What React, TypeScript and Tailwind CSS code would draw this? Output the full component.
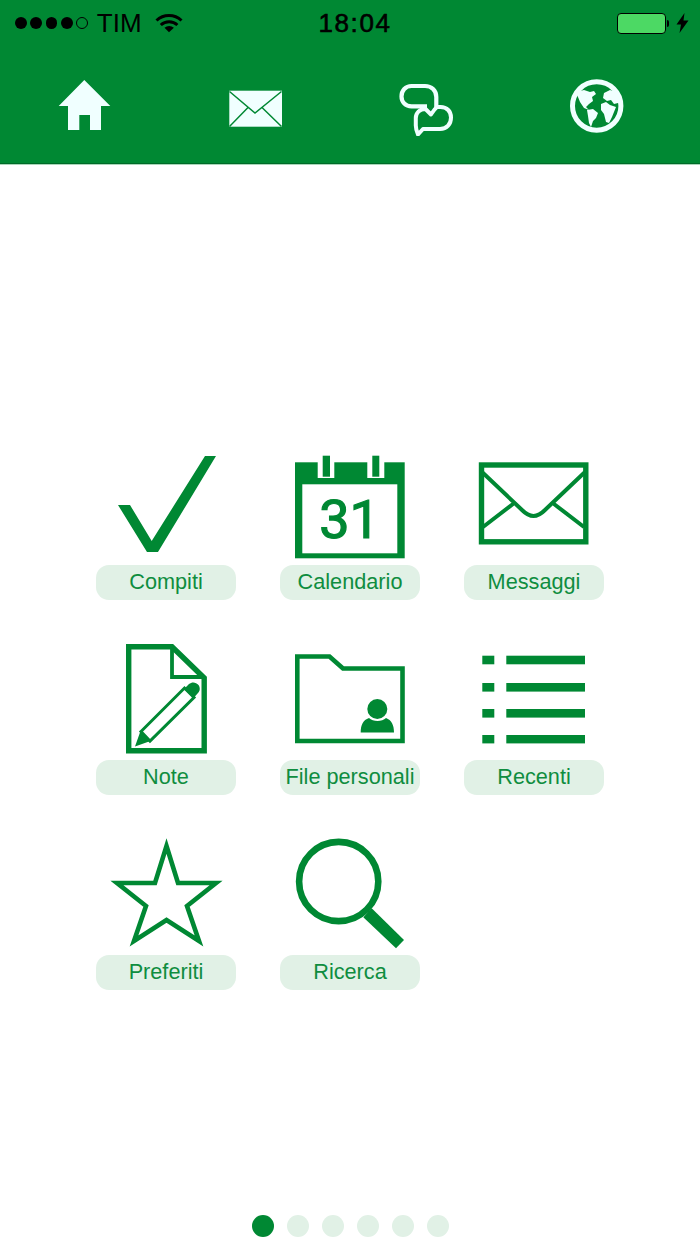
const ICE = "#f0ffff";
const GREEN = "#008833";

function Wifi() {
  return (
    <svg width="28" height="20" viewBox="156 13 28 20" className="block">
      <path d="M157.5 20.5a18 18 0 0 1 25 0" fill="none" stroke="#000" strokeWidth="3" />
      <path d="M161.8 25a12 12 0 0 1 16.6 0" fill="none" stroke="#000" strokeWidth="3" />
      <path d="M165.5 27.8a7 7 0 0 1 9.4 0L170 32.2z" fill="#000" />
    </svg>
  );
}

function StatusBar() {
  return (
    <div className="flex h-[46px] items-center pl-[15px] pr-[11px] font-['Liberation_Sans',sans-serif] text-black">
      <div className="flex flex-1 items-center">
        <div className="flex gap-[3.6px]">
          <span className="h-[11.7px] w-[11.7px] rounded-full bg-black" />
          <span className="h-[11.7px] w-[11.7px] rounded-full bg-black" />
          <span className="h-[11.7px] w-[11.7px] rounded-full bg-black" />
          <span className="h-[11.7px] w-[11.7px] rounded-full bg-black" />
          <span className="h-[11.7px] w-[11.7px] rounded-full border border-black" />
        </div>
        <span className="ml-[9px] text-[26px] leading-none">TIM</span>
        <span className="ml-[13px]">
          <Wifi />
        </span>
      </div>
      <span className="ml-[6px] text-[26px] font-medium leading-none tracking-[1.6px] [-webkit-text-stroke:0.6px_#000]">18:04</span>
      <div className="flex flex-1 items-center justify-end">
        <div className="h-[21px] w-[49px] rounded-[4px] border-[1.5px] border-black bg-[#4cd964]" />
        <div className="ml-[1px] h-[7px] w-[2.5px] rounded-r-[2px] bg-black" />
        <svg width="13" height="20" viewBox="0 0 13 20" className="ml-[7px] block">
          <path d="M8.5 0 0.5 11.5h4.5L3.5 20 12.5 7.5H7.5z" fill="#000" />
        </svg>
      </div>
    </div>
  );
}

function HomeIcon() {
  return (
    <svg width="54" height="54" viewBox="58 78 54 54" className="block">
      <path d="M84.3 80 110.3 106H101V130H90V115H79.3V130H68V106H58.7z" fill={ICE} />
    </svg>
  );
}

function MailNavIcon() {
  return (
    <svg width="54" height="54" viewBox="229 78 54 54" className="block">
      <rect x="229.3" y="90.7" width="52.7" height="36" fill={ICE} />
      <path d="M229.5 91.5 255 113 281.5 91.5M229.5 126.5 248 107.5M281.5 126.5 262 107.5" fill="none" stroke={GREEN} strokeWidth="1.5" />
    </svg>
  );
}

function ChatIcon() {
  return (
    <svg width="56" height="58" viewBox="398 78 56 58" className="block">
      <path
        d="M427 106.3H411.5C405.5 106.3 401.5 102 401.5 96.5C401.5 90.5 405.5 86 411.5 86H425C431.5 86 436.3 90.5 436.3 97V109"
        fill="none"
        stroke={ICE}
        strokeWidth="4.2"
      />
      <path
        d="M431 114.5 425.5 109C419.5 109 415.8 113 415.8 118V125.5C415.8 129 416.5 131 418 134.5L423 129H440C447 129 451 124 451 117.5C451 111.5 447 107 440.5 107H437C434.5 109 433 111.5 431 114.5Z"
        fill="none"
        stroke={ICE}
        strokeWidth="4"
        strokeLinejoin="round"
      />
    </svg>
  );
}

function GlobeIcon() {
  return (
    <svg width="56" height="56" viewBox="569 78 56 56" className="block">
      <circle cx="596.7" cy="106" r="24.2" fill={GREEN} stroke={ICE} strokeWidth="5" />
      <g fill={ICE}>
        <path d="M576 92 584 90 590 92 594 91 596 94 592 97 593 101 589 104 586 107 589 110 584 108 580 102z" />
        <path d="M587 110 593 109 598 113 596 118 593 121 591 127 589 123 588 116z" />
        <path d="M604 93 610 90 616 92 620 97 622 105 618 103 614 104 611 100 607 101 603 98z" />
        <path d="M601 104 606 102 610 105 616 107 614 112 612 117 609 123 606 122 604 114 601 110z" />
      </g>
    </svg>
  );
}

function CheckIcon() {
  return (
    <svg width="140" height="125" viewBox="96 440 140 125" className="block">
      <path d="M118 505H130L151.7 541 205 456H216L158 552H147z" fill={GREEN} />
    </svg>
  );
}

function CalendarIcon() {
  return (
    <svg width="140" height="125" viewBox="280 440 140 125" className="block">
      <rect x="295" y="462.3" width="109.7" height="96" fill={GREEN} />
      <rect x="302.3" y="484.3" width="95" height="69" fill="#fff" />
      <rect x="317.7" y="462" width="16.6" height="16" fill="#fff" />
      <rect x="367.3" y="462" width="17" height="16" fill="#fff" />
      <rect x="322.7" y="455.7" width="7.3" height="21" fill={GREEN} />
      <rect x="372.3" y="455.7" width="7" height="21" fill={GREEN} />
      <text
        x="349.5"
        y="538"
        textAnchor="middle"
        fontFamily="Roboto, sans-serif"
        fontSize="54"
        fill={GREEN}
        stroke={GREEN}
        strokeWidth="1.2"
      >
        31
      </text>
    </svg>
  );
}

function MailIcon() {
  return (
    <svg width="140" height="125" viewBox="464 440 140 125" className="block">
      <rect x="481.5" y="465" width="104.3" height="76.8" fill="none" stroke={GREEN} strokeWidth="5.4" />
      <path
        d="M482 472 522 510C530 518 537 518 545 510L585 472M483 527 513 504M584 527 554 504"
        fill="none"
        stroke={GREEN}
        strokeWidth="4"
      />
    </svg>
  );
}

function NoteIcon() {
  return (
    <svg width="140" height="125" viewBox="96 635 140 125" className="block">
      <path d="M128.7 646.8H172L204.2 678V750.8H128.7z" fill="none" stroke={GREEN} strokeWidth="5.4" />
      <path d="M172 647V677H204" fill="none" stroke={GREEN} strokeWidth="3.8" />
      <path d="M141 731.5 184.5 688 194 697.5 150 741z" fill="none" stroke={GREEN} strokeWidth="3" />
      <path d="M135 746.5 140.5 731 150.5 741zM184 689 189 684C192 681.5 196 682 198.5 685 200.5 688 200 691 198 693L193.5 698z" fill={GREEN} />
    </svg>
  );
}

function FolderIcon() {
  return (
    <svg width="140" height="125" viewBox="280 635 140 125" className="block">
      <path d="M297.3 656.5H329.5L343 668.5H402.5V741H297.3z" fill="none" stroke={GREEN} strokeWidth="4.6" />
      <circle cx="377.3" cy="709" r="10" fill={GREEN} />
      <path d="M360.7 732.5C360.7 725 363 720 369 718 373 722 382 722 386 718 391.5 720 394 725 394 732.5z" fill={GREEN} />
    </svg>
  );
}

function ListIcon() {
  return (
    <svg width="140" height="125" viewBox="464 635 140 125" className="block">
      <g fill={GREEN}>
        <rect x="482.3" y="655.7" width="12" height="8.6" />
        <rect x="506.3" y="655.7" width="78.7" height="8.6" />
        <rect x="482.3" y="683" width="12" height="8.6" />
        <rect x="506.3" y="683" width="78.7" height="8.6" />
        <rect x="482.3" y="709" width="12" height="8.6" />
        <rect x="506.3" y="709" width="78.7" height="8.6" />
        <rect x="482.3" y="735" width="12" height="8.4" />
        <rect x="506.3" y="735" width="78.7" height="8.4" />
      </g>
    </svg>
  );
}

function StarIcon() {
  return (
    <svg width="140" height="125" viewBox="96 830 140 125" className="block">
      <path
        d="M166.5 846 178 883 216 883 187 906 199 941 166.5 920 134 941 146 906 117 883 155 883z"
        fill="none"
        stroke={GREEN}
        strokeWidth="4.6"
        strokeMiterlimit="10"
      />
    </svg>
  );
}

function SearchIcon() {
  return (
    <svg width="140" height="125" viewBox="280 830 140 125" className="block">
      <circle cx="338.7" cy="881.5" r="39.6" fill="none" stroke={GREEN} strokeWidth="6.6" />
      <path d="M363.3 917.3 371.7 908.3 404 940 396 948.3z" fill={GREEN} />
    </svg>
  );
}

const tiles = [
  { label: "Compiti", icon: <CheckIcon /> },
  { label: "Calendario", icon: <CalendarIcon /> },
  { label: "Messaggi", icon: <MailIcon /> },
  { label: "Note", icon: <NoteIcon /> },
  { label: "File personali", icon: <FolderIcon /> },
  { label: "Recenti", icon: <ListIcon /> },
  { label: "Preferiti", icon: <StarIcon /> },
  { label: "Ricerca", icon: <SearchIcon /> },
];

export default function App() {
  return (
    <div className="flex h-[1244px] w-[700px] flex-col overflow-hidden bg-white font-['Liberation_Sans',sans-serif]">
      <header className="h-[164px] shrink-0 border-b border-[#006a28] bg-[#008833]">
        <StatusBar />
        {/* nav icons */}
        <nav className="grid w-[682px] grid-cols-4 pt-[32px]">
          <div className="flex justify-center">
            <HomeIcon />
          </div>
          <div className="flex justify-center">
            <MailNavIcon />
          </div>
          <div className="flex justify-center">
            <ChatIcon />
          </div>
          <div className="flex justify-center">
            <GlobeIcon />
          </div>
        </nav>
      </header>
      <div className="h-px shrink-0 bg-[#a9d6b8]" />

      <main className="flex-1 pl-[96px] pt-[275px]">
        <div className="grid w-[508px] grid-cols-3 gap-x-[44px] gap-y-[35px]">
          {tiles.map((tile) => (
            <div key={tile.label} className="w-[140px]">
              {tile.icon}
              <div className="flex h-[35px] items-center justify-center whitespace-nowrap rounded-[13px] bg-[#e1f1e6] pb-[2px] text-[21.7px] leading-none text-[#0f8d3f]">
                {tile.label}
              </div>
            </div>
          ))}
        </div>
      </main>

      {/* page dots */}
      <div className="flex shrink-0 gap-[13px] pb-[7px] pl-[252px]">
        <span className="h-[22px] w-[22px] rounded-full bg-[#008833]" />
        <span className="h-[22px] w-[22px] rounded-full bg-[#e1f1e6]" />
        <span className="h-[22px] w-[22px] rounded-full bg-[#e1f1e6]" />
        <span className="h-[22px] w-[22px] rounded-full bg-[#e1f1e6]" />
        <span className="h-[22px] w-[22px] rounded-full bg-[#e1f1e6]" />
        <span className="h-[22px] w-[22px] rounded-full bg-[#e1f1e6]" />
      </div>
    </div>
  );
}
